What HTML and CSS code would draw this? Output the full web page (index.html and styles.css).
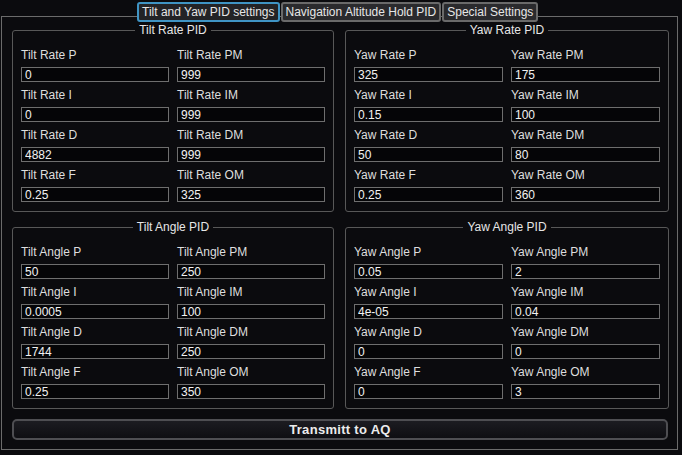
FILE: index.html
```html
<!DOCTYPE html>
<html lang="en">
<head>
    <meta charset="UTF-8">
    <meta name="viewport" content="width=device-width, initial-scale=1.0">
    <title>PID Settings</title>
    <link rel="stylesheet" href="styles.css">
</head>
<body>
    <div class="tabs">
        <div class="tab active">Tilt and Yaw PID settings</div>
        <div class="tab">Navigation Altitude Hold PID</div>
        <div class="tab">Special Settings</div>
    </div>

    <div class="frame">
        <div class="groups">
            <fieldset class="group">
                <legend>Tilt Rate PID</legend>
                <div class="fields">
                    <label class="field">Tilt Rate P<input value="0"></label>
                    <label class="field">Tilt Rate PM<input value="999"></label>
                    <label class="field">Tilt Rate I<input value="0"></label>
                    <label class="field">Tilt Rate IM<input value="999"></label>
                    <label class="field">Tilt Rate D<input value="4882"></label>
                    <label class="field">Tilt Rate DM<input value="999"></label>
                    <label class="field">Tilt Rate F<input value="0.25"></label>
                    <label class="field">Tilt Rate OM<input value="325"></label>
                </div>
            </fieldset>

            <fieldset class="group">
                <legend>Yaw Rate PID</legend>
                <div class="fields">
                    <label class="field">Yaw Rate P<input value="325"></label>
                    <label class="field">Yaw Rate PM<input value="175"></label>
                    <label class="field">Yaw Rate I<input value="0.15"></label>
                    <label class="field">Yaw Rate IM<input value="100"></label>
                    <label class="field">Yaw Rate D<input value="50"></label>
                    <label class="field">Yaw Rate DM<input value="80"></label>
                    <label class="field">Yaw Rate F<input value="0.25"></label>
                    <label class="field">Yaw Rate OM<input value="360"></label>
                </div>
            </fieldset>

            <fieldset class="group">
                <legend>Tilt Angle PID</legend>
                <div class="fields">
                    <label class="field">Tilt Angle P<input value="50"></label>
                    <label class="field">Tilt Angle PM<input value="250"></label>
                    <label class="field">Tilt Angle I<input value="0.0005"></label>
                    <label class="field">Tilt Angle IM<input value="100"></label>
                    <label class="field">Tilt Angle D<input value="1744"></label>
                    <label class="field">Tilt Angle DM<input value="250"></label>
                    <label class="field">Tilt Angle F<input value="0.25"></label>
                    <label class="field">Tilt Angle OM<input value="350"></label>
                </div>
            </fieldset>

            <fieldset class="group">
                <legend>Yaw Angle PID</legend>
                <div class="fields">
                    <label class="field">Yaw Angle P<input value="0.05"></label>
                    <label class="field">Yaw Angle PM<input value="2"></label>
                    <label class="field">Yaw Angle I<input value="4e-05"></label>
                    <label class="field">Yaw Angle IM<input value="0.04"></label>
                    <label class="field">Yaw Angle D<input value="0"></label>
                    <label class="field">Yaw Angle DM<input value="0"></label>
                    <label class="field">Yaw Angle F<input value="0"></label>
                    <label class="field">Yaw Angle OM<input value="3"></label>
                </div>
            </fieldset>
        </div>

        <button class="transmit">Transmitt to AQ</button>
    </div>
</body>
</html>
```

FILE: styles.css
```css
body {
    margin: 0;
    padding-top: 2px;
    background: #0b0b0e;
    color: #dedede;
    font-family: "Liberation Sans", Arial, sans-serif;
    font-size: 12px;
}

/* Tabs */
.tabs {
    display: flex;
    gap: 1px;
    margin-left: 137px;
    position: relative;
    z-index: 1;
}

.tab {
    height: 16px;
    line-height: 16px;
    padding: 0 3px;
    background: #2a2a2d;
    border: 2px solid #6a6a6a;
    border-radius: 3px;
    color: #e6e6e6;
    white-space: nowrap;
}

.tab.active {
    border-color: #3f94c4;
    background: #232326;
}

/* Main frame */
.frame {
    margin: -6px 0 0 1px;
    width: 677px;
    height: 434px;
    border: 1px solid #6b6b6b;
    padding: 6px 8px 0 10px;
    box-sizing: border-box;
}

.groups {
    display: grid;
    grid-template-columns: 322px 324px;
    column-gap: 11px;
    row-gap: 8px;
}

.group {
    margin: 0;
    padding: 0 8px 9px 8px;
    border: 1px solid #585858;
    border-radius: 3px;
    min-width: 0;
}

.group legend {
    margin: 0 auto;
    padding: 0 4px;
    line-height: 15px;
    color: #e6e6e6;
}

.fields {
    display: grid;
    grid-template-columns: 1fr 1fr;
    column-gap: 8px;
    row-gap: 6px;
    padding-top: 10px;
}

.field {
    display: flex;
    flex-direction: column;
    gap: 4px;
    line-height: 15px;
    min-width: 0;
}

.field input {
    width: 100%;
    min-width: 0;
    height: 15px;
    margin: 0;
    padding: 0 3px;
    box-sizing: border-box;
    background: #050507;
    border: 1px solid #6e6e6e;
    color: #f2f2f2;
    font-family: "Liberation Sans", Arial, sans-serif;
    font-size: 12px;
    outline: none;
}

.transmit {
    display: block;
    width: 656px;
    height: 21px;
    margin-top: 10px;
    background: linear-gradient(to bottom, #1c1c21, #0e0e12);
    border: 2px solid #4e4e52;
    border-radius: 5px;
    color: #ececec;
    font-family: "Liberation Sans", Arial, sans-serif;
    font-size: 13px;
    font-weight: bold;
    letter-spacing: 0.3px;
    cursor: pointer;
}
```
